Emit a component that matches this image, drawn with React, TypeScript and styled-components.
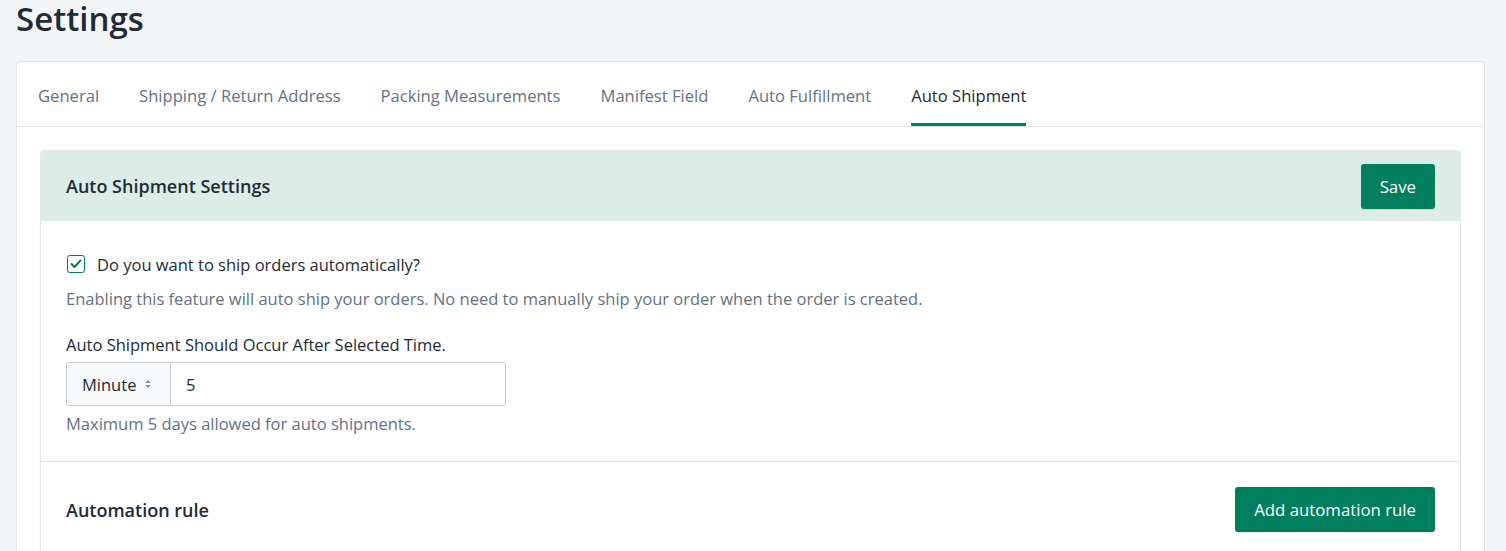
import React from "react";
import styled, { createGlobalStyle } from "styled-components";

const Global = createGlobalStyle`
  html, body { margin: 0; padding: 0; background: #f4f5f7; }
  body { font-family: "Open Sans", "Noto Sans", sans-serif; color: #212b36; }
  * { box-sizing: border-box; }
`;

const Page = styled.div`
  padding: 0 21px 0 16px;
  height: 551px;
  overflow: hidden;
`;

const Title = styled.h1`
  margin: 0;
  padding-top: 1px;
  font-size: 33px;
  font-weight: 600;
  line-height: 36px;
  color: #212b36;
  height: 61px;
`;

const Card = styled.div`
  background: #fff;
  border: 1px solid #e3e5e8;
  border-radius: 4px;
`;

const Tabs = styled.nav`
  display: flex;
  gap: 40px;
  padding: 0 21px;
  border-bottom: 1px solid #dfe3e8;
  height: 65px;
`;

const Tab = styled.div<{ $active?: boolean }>`
  display: flex;
  align-items: center;
  font-size: 16.6px;
  color: ${(p) => (p.$active ? "#212b36" : "#637381")};
  border-bottom: 3px solid ${(p) => (p.$active ? "#007f5f" : "transparent")};
  padding-top: 6px;
`;

const Content = styled.div`
  padding: 23px 23px 0 23px;
`;

const Panel = styled.div`
  border: 1px solid #e6e8eb;
  border-radius: 4px;
  box-shadow: 0 0 2px rgba(0, 0, 0, 0.05);
  overflow: hidden;
`;

const PanelHeader = styled.div`
  background: #deece8;
  height: 70px;
  display: flex;
  align-items: center;
  justify-content: space-between;
  padding: 0 25px;
`;

const SectionTitle = styled.h2`
  margin: 0;
  font-size: 18px;
  font-weight: 600;
  line-height: 24px;
  color: #212b36;
`;

const Button = styled.button`
  background: #007f5f;
  color: #fff;
  border: none;
  border-radius: 3px;
  height: 45px;
  padding: 0 19px;
  font-family: inherit;
  font-size: 16.8px;
  cursor: pointer;
  box-shadow: 0 1px 0 rgba(0, 0, 0, 0.08);
`;

const PanelBody = styled.div`
  padding: 33px 25px 27px 25px;
  border-bottom: 1px solid #e1e3e5;
`;

const CheckRow = styled.label`
  display: flex;
  align-items: center;
  gap: 12px;
  font-size: 16.5px;
  color: #212b36;
  height: 20px;
`;

const Box = styled.span`
  width: 18px;
  height: 18px;
  border: 1.5px solid #007f5f;
  border-radius: 3px;
  display: flex;
  align-items: center;
  justify-content: center;
  margin-left: 1px;
`;

const Help = styled.p<{ $mt: number }>`
  margin: ${(p) => p.$mt}px 0 0;
  font-size: 16.5px;
  color: #637381;
  line-height: 20px;
`;

const FieldLabel = styled.div`
  margin-top: 26px;
  font-size: 16.5px;
  color: #212b36;
  line-height: 20px;
`;

const InputGroup = styled.div`
  margin-top: 7px;
  display: flex;
  width: 440px;
  height: 44px;
  border: 1px solid #c9cccf;
  border-radius: 3px;
  overflow: hidden;
`;

const SelectBox = styled.div`
  width: 104px;
  background: #f9fafb;
  border-right: 1px solid #c9cccf;
  display: flex;
  align-items: center;
  gap: 8px;
  padding-left: 15px;
  font-size: 16.5px;
  color: #212b36;
`;

const ValueInput = styled.div`
  flex: 1;
  display: flex;
  align-items: center;
  padding-left: 15px;
  font-size: 16.5px;
  color: #212b36;
`;

const RuleRow = styled.div`
  height: 95px;
  display: flex;
  align-items: center;
  justify-content: space-between;
  padding: 0 25px;
`;

const Caret = () => (
  <svg width="8" height="12" viewBox="0 0 8 12">
    <path d="M1 5 L4 2 L7 5 Z" fill="#8c9196" />
    <path d="M1 7 L4 10 L7 7 Z" fill="#8c9196" />
  </svg>
);

export default function App() {
  const tabs = [
    "General",
    "Shipping / Return Address",
    "Packing Measurements",
    "Manifest Field",
    "Auto Fulfillment",
    "Auto Shipment",
  ];
  return (
    <>
      <Global />
      <Page>
        <Title>Settings</Title>
        <Card>
          <Tabs>
            {tabs.map((t) => (
              <Tab key={t} $active={t === "Auto Shipment"}>
                {t}
              </Tab>
            ))}
          </Tabs>
          <Content>
            <Panel>
              <PanelHeader>
                <SectionTitle>Auto Shipment Settings</SectionTitle>
                <Button>Save</Button>
              </PanelHeader>
              <PanelBody>
                <CheckRow>
                  <Box>
                    <svg width="12" height="10" viewBox="0 0 12 10">
                      <path d="M1.5 5 L4.5 8 L10.5 1.5" fill="none" stroke="#007f5f" strokeWidth="2" strokeLinecap="round" strokeLinejoin="round" />
                    </svg>
                  </Box>
                  Do you want to ship orders automatically?
                </CheckRow>
                <Help $mt={15}>
                  Enabling this feature will auto ship your orders. No need to manually ship your order when the order is created.
                </Help>
                <FieldLabel>Auto Shipment Should Occur After Selected Time.</FieldLabel>
                <InputGroup>
                  <SelectBox>
                    Minute <Caret />
                  </SelectBox>
                  <ValueInput>5</ValueInput>
                </InputGroup>
                <Help $mt={8}>Maximum 5 days allowed for auto shipments.</Help>
              </PanelBody>
              <RuleRow>
                <SectionTitle>Automation rule</SectionTitle>
                <Button>Add automation rule</Button>
              </RuleRow>
            </Panel>
          </Content>
        </Card>
      </Page>
    </>
  );
}
